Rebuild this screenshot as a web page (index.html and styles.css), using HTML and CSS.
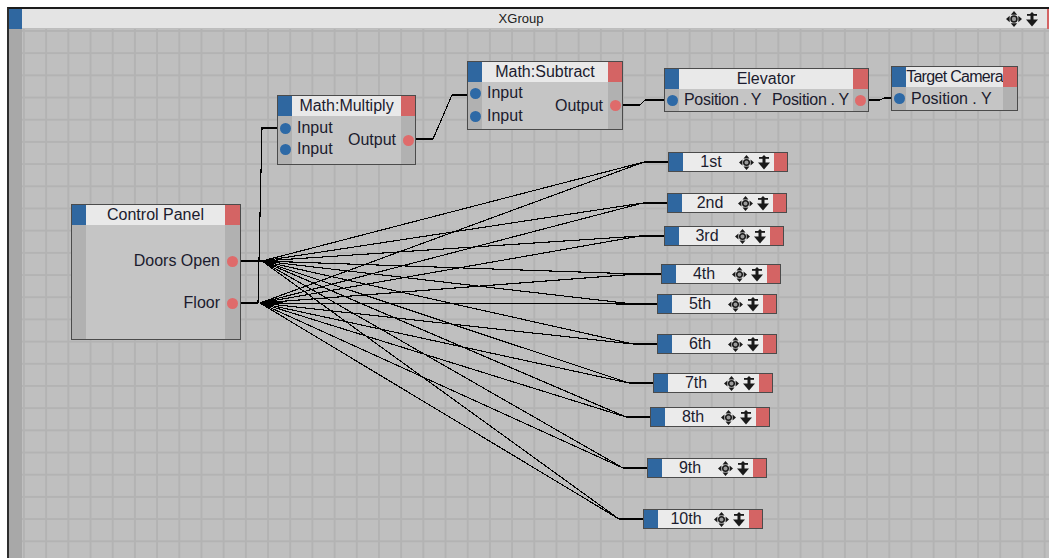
FILE: index.html
```html
<!DOCTYPE html>
<html lang="en">
<head>
    <meta charset="UTF-8">
    <meta name="viewport" content="width=device-width, initial-scale=1.0">
    <title>XGroup</title>
    <link rel="stylesheet" href="styles.css">
</head>
<body>
    <svg class="defs" aria-hidden="true">
        <symbol id="i-move" viewBox="0 0 14 14">
            <path d="M7 0L9.8 3.2H4.2Z M7 14L4.2 10.8H9.8Z M0 7L3.2 4.2V9.8Z M14 7L10.8 9.8V4.2Z" fill="#1a1a1a"/>
            <circle cx="7" cy="7" r="2.6" fill="#9a9a9a" stroke="#1a1a1a" stroke-width="1.4"/>
        </symbol>
        <symbol id="i-drop" viewBox="0 0 12 15">
            <path d="M6 0L8.2 2.2H3.8Z" fill="#1a1a1a"/>
            <rect x="1" y="2" width="10" height="1.8" fill="#1a1a1a"/>
            <rect x="4.5" y="3" width="3" height="5" fill="#1a1a1a"/>
            <path d="M0 7.5H12L6 14.5Z" fill="#1a1a1a"/>
        </symbol>
    </svg>

    <div class="xgroup">
        <div class="xg-bar">
            <span class="xg-tab"></span>
            <span class="xg-title">XGroup</span>
            <span class="xg-icons">
                <svg class="ic-move-lg"><use href="#i-move"/></svg>
                <svg class="ic-drop-lg"><use href="#i-drop"/></svg>
            </span>
            <span class="xg-out"></span>
        </div>
        <div class="xg-side"></div>

        <div class="canvas">
            <!-- wires, in page coordinates -->
            <svg class="wires" width="1027" height="529" viewBox="22 29 1027 529" shape-rendering="crispEdges">
                <g fill="none" stroke="#000" stroke-width="1.1">
                    <path d="M237 261H262"/>
                    <path d="M237 303H258"/>
                    <path d="M258 303L262 128H277"/>
                    <path d="M416 139H433L452 95H467"/>
                    <path d="M623 105H640L645 100H664"/>
                    <path d="M869 100H880L884 98H891"/>

                    <path d="M262 261L644 162H668"/>
                    <path d="M262 261L643 203H667"/>
                    <path d="M262 261L640 236H664"/>
                    <path d="M262 261L637 274H661"/>
                    <path d="M262 261L633 304H657"/>
                    <path d="M262 261L633 344H657"/>
                    <path d="M262 261L629 383H653"/>
                    <path d="M262 261L626 417H650"/>
                    <path d="M262 261L623 468H647"/>
                    <path d="M262 261L619 519H643"/>

                    <path d="M260 303L644 162H668"/>
                    <path d="M260 303L643 203H667"/>
                    <path d="M260 303L640 236H664"/>
                    <path d="M260 303L637 274H661"/>
                    <path d="M260 303L633 304H657"/>
                    <path d="M260 303L633 344H657"/>
                    <path d="M260 303L629 383H653"/>
                    <path d="M260 303L626 417H650"/>
                    <path d="M260 303L623 468H647"/>
                    <path d="M260 303L619 519H643"/>
                </g>
            </svg>

            <div class="node n-control">
                <div class="node-head"><span class="tab-in"></span><span class="node-title">Control Panel</span><span class="tab-out"></span></div>
                <div class="node-body cp-body">
                    <div class="port out"><span class="port-label">Doors Open</span><span class="dot-cell"><i class="dot red"></i></span></div>
                    <div class="port out"><span class="port-label">Floor</span><span class="dot-cell"><i class="dot red"></i></span></div>
                </div>
            </div>

            <div class="node n-multiply">
                <div class="node-head"><span class="tab-in"></span><span class="node-title">Math:Multiply</span><span class="tab-out"></span></div>
                <div class="node-body math-body">
                    <div class="ins">
                        <div class="port in"><span class="dot-cell"><i class="dot blue"></i></span><span class="port-label">Input</span></div>
                        <div class="port in"><span class="dot-cell"><i class="dot blue"></i></span><span class="port-label">Input</span></div>
                    </div>
                    <div class="port out"><span class="port-label">Output</span><span class="dot-cell"><i class="dot red"></i></span></div>
                </div>
            </div>

            <div class="node n-subtract">
                <div class="node-head"><span class="tab-in"></span><span class="node-title">Math:Subtract</span><span class="tab-out"></span></div>
                <div class="node-body math-body">
                    <div class="ins">
                        <div class="port in"><span class="dot-cell"><i class="dot blue"></i></span><span class="port-label">Input</span></div>
                        <div class="port in"><span class="dot-cell"><i class="dot blue"></i></span><span class="port-label">Input</span></div>
                    </div>
                    <div class="port out"><span class="port-label">Output</span><span class="dot-cell"><i class="dot red"></i></span></div>
                </div>
            </div>

            <div class="node n-elevator">
                <div class="node-head"><span class="tab-in"></span><span class="node-title">Elevator</span><span class="tab-out"></span></div>
                <div class="node-body row-body">
                    <div class="port in"><span class="dot-cell"><i class="dot blue"></i></span><span class="port-label">Position . Y</span></div>
                    <div class="port out"><span class="port-label">Position . Y</span><span class="dot-cell"><i class="dot red"></i></span></div>
                </div>
            </div>

            <div class="node n-camera">
                <div class="node-head"><span class="tab-in"></span><span class="node-title">Target Camera</span><span class="tab-out"></span></div>
                <div class="node-body row-body">
                    <div class="port in"><span class="dot-cell"><i class="dot blue"></i></span><span class="port-label">Position . Y</span></div>
                </div>
            </div>

            <div class="floor f1"><span class="f-in"></span><span class="f-name">1st</span><span class="f-icons"><svg class="ic-move"><use href="#i-move"/></svg><svg class="ic-drop"><use href="#i-drop"/></svg></span><span class="f-out"></span></div>
            <div class="floor f2"><span class="f-in"></span><span class="f-name">2nd</span><span class="f-icons"><svg class="ic-move"><use href="#i-move"/></svg><svg class="ic-drop"><use href="#i-drop"/></svg></span><span class="f-out"></span></div>
            <div class="floor f3"><span class="f-in"></span><span class="f-name">3rd</span><span class="f-icons"><svg class="ic-move"><use href="#i-move"/></svg><svg class="ic-drop"><use href="#i-drop"/></svg></span><span class="f-out"></span></div>
            <div class="floor f4"><span class="f-in"></span><span class="f-name">4th</span><span class="f-icons"><svg class="ic-move"><use href="#i-move"/></svg><svg class="ic-drop"><use href="#i-drop"/></svg></span><span class="f-out"></span></div>
            <div class="floor f5"><span class="f-in"></span><span class="f-name">5th</span><span class="f-icons"><svg class="ic-move"><use href="#i-move"/></svg><svg class="ic-drop"><use href="#i-drop"/></svg></span><span class="f-out"></span></div>
            <div class="floor f6"><span class="f-in"></span><span class="f-name">6th</span><span class="f-icons"><svg class="ic-move"><use href="#i-move"/></svg><svg class="ic-drop"><use href="#i-drop"/></svg></span><span class="f-out"></span></div>
            <div class="floor f7"><span class="f-in"></span><span class="f-name">7th</span><span class="f-icons"><svg class="ic-move"><use href="#i-move"/></svg><svg class="ic-drop"><use href="#i-drop"/></svg></span><span class="f-out"></span></div>
            <div class="floor f8"><span class="f-in"></span><span class="f-name">8th</span><span class="f-icons"><svg class="ic-move"><use href="#i-move"/></svg><svg class="ic-drop"><use href="#i-drop"/></svg></span><span class="f-out"></span></div>
            <div class="floor f9"><span class="f-in"></span><span class="f-name">9th</span><span class="f-icons"><svg class="ic-move"><use href="#i-move"/></svg><svg class="ic-drop"><use href="#i-drop"/></svg></span><span class="f-out"></span></div>
            <div class="floor f10"><span class="f-in"></span><span class="f-name">10th</span><span class="f-icons"><svg class="ic-move"><use href="#i-move"/></svg><svg class="ic-drop"><use href="#i-drop"/></svg></span><span class="f-out"></span></div>
        </div>
    </div>
</body>
</html>
```

FILE: styles.css
```css
body {
    margin: 0;
    background-color: #ffffff;
    overflow: hidden;
    font-family: "Liberation Sans", Arial, sans-serif;
    color: #1b1b2e;
}

.defs {
    position: absolute;
    width: 0;
    height: 0;
}

/* frame */
.xgroup {
    margin: 7px 0 0 7px;
    height: 551px;
    box-sizing: border-box;
    border-top: 2px solid #1c1c1c;
    border-left: 2px solid #2e2e2e;
    display: grid;
    grid-template-columns: 13px 1fr;
    grid-template-rows: 20px 1fr;
}

.xg-bar {
    grid-column: 1 / 3;
    display: flex;
    align-items: stretch;
    background-color: #e4e4e4;
    box-shadow: inset 0 -1px 0 #bdbdbd;
}

.xg-tab {
    width: 13px;
    background-color: #2f67a0;
}

.xg-title {
    flex: 1;
    text-align: center;
    font-size: 13px;
    line-height: 19px;
    padding-left: 14px;
    color: #202020;
}

.xg-icons {
    display: flex;
    align-items: center;
    gap: 4px;
    margin-right: 9px;
}

.ic-move-lg {
    width: 16px;
    height: 16px;
}

.ic-drop-lg {
    width: 12px;
    height: 17px;
}

.xg-out {
    width: 2px;
    background-color: #d46464;
}

.xg-side {
    background-color: #a8a8a8;
}

.canvas {
    position: relative;
    overflow: hidden;
    background-color: #bfbfbf;
    background-image:
        linear-gradient(to right, #b3b3b3 2px, transparent 2px),
        linear-gradient(to bottom, #b3b3b3 2px, transparent 2px);
    background-size: 22.2px 22.2px;
    background-position: 1px 1px;
}

.wires {
    position: absolute;
    left: 0;
    top: 0;
}

/* nodes */
.node {
    --l: 14px;
    --r: 15px;
    position: absolute;
    box-sizing: border-box;
    border: 1px solid #4b4b4b;
    display: flex;
    flex-direction: column;
    font-size: 16px;
}

.node-head {
    display: flex;
    height: 20px;
    flex-shrink: 0;
    background-color: #e9e9e9;
}

.tab-in {
    width: var(--l);
    background-color: #2f67a0;
}

.tab-out {
    width: var(--r);
    background-color: #d46464;
}

.node-title {
    flex: 1;
    text-align: center;
    line-height: 20px;
    white-space: nowrap;
    overflow: hidden;
}

.node-body {
    flex: 1;
    background: linear-gradient(to right,
        #b1b1b1 var(--l), #c5c5c5 var(--l),
        #c5c5c5 calc(100% - var(--r)), #b1b1b1 calc(100% - var(--r)));
}

.port {
    display: flex;
    align-items: center;
    height: 20px;
    white-space: nowrap;
}

.port.out {
    justify-content: flex-end;
}

.port.in .port-label {
    padding-left: 5px;
}

.port.out .port-label {
    padding-right: 5px;
}

.dot-cell {
    display: flex;
    align-items: center;
    justify-content: center;
    height: 100%;
}

.port.in .dot-cell {
    width: var(--l);
}

.port.out .dot-cell {
    width: var(--r);
}

.dot {
    width: 11px;
    height: 11px;
    border-radius: 50%;
}

.dot.blue {
    background-color: #2d69a6;
}

.dot.red {
    background-color: #df6b6b;
}

.cp-body {
    display: flex;
    flex-direction: column;
    padding-top: 26px;
    gap: 22px;
}

.math-body {
    display: flex;
    align-items: center;
    justify-content: space-between;
}

.math-body .ins {
    align-self: flex-start;
    display: flex;
    flex-direction: column;
}

.n-multiply .ins {
    padding-top: 2px;
    gap: 1px;
}

.n-subtract .ins {
    padding-top: 1px;
    gap: 3px;
}

.row-body {
    display: flex;
    align-items: center;
    justify-content: space-between;
}

.n-control { left: 49px; top: 175px; width: 170px; height: 136px; }
.n-multiply { --r: 14px; left: 255px; top: 66px; width: 139px; height: 70px; }
.n-subtract { --r: 14px; left: 445px; top: 32px; width: 156px; height: 69px; }
.n-elevator { left: 642px; top: 39px; width: 205px; height: 44px; }
.n-camera { --r: 14px; left: 869px; top: 37px; width: 127px; height: 45px; }

.n-elevator .port-label {
    letter-spacing: -0.3px;
}

.n-elevator .port.out .port-label {
    padding-right: 4px;
}

.n-camera .node-title {
    letter-spacing: -0.7px;
}

/* floor buttons */
.floor {
    position: absolute;
    width: 120px;
    height: 20px;
    box-sizing: border-box;
    border: 1px solid #4b4b4b;
    display: flex;
    background-color: #ebebeb;
    font-size: 16px;
}

.f-in {
    width: 14px;
    background-color: #2f67a0;
}

.f-out {
    width: 13px;
    background-color: #d46464;
}

.f-name {
    flex: 1;
    text-align: center;
    line-height: 18px;
}

.f-icons {
    display: flex;
    align-items: center;
    gap: 4px;
    padding-right: 4px;
}

.ic-move {
    width: 15px;
    height: 15px;
}

.ic-drop {
    width: 12px;
    height: 15px;
}

.f1 { left: 646px; top: 123px; }
.f2 { left: 645px; top: 164px; }
.f3 { left: 642px; top: 197px; }
.f4 { left: 639px; top: 235px; }
.f5 { left: 635px; top: 265px; }
.f6 { left: 635px; top: 305px; }
.f7 { left: 631px; top: 344px; }
.f8 { left: 628px; top: 378px; }
.f9 { left: 625px; top: 429px; }
.f10 { left: 621px; top: 480px; }
```
